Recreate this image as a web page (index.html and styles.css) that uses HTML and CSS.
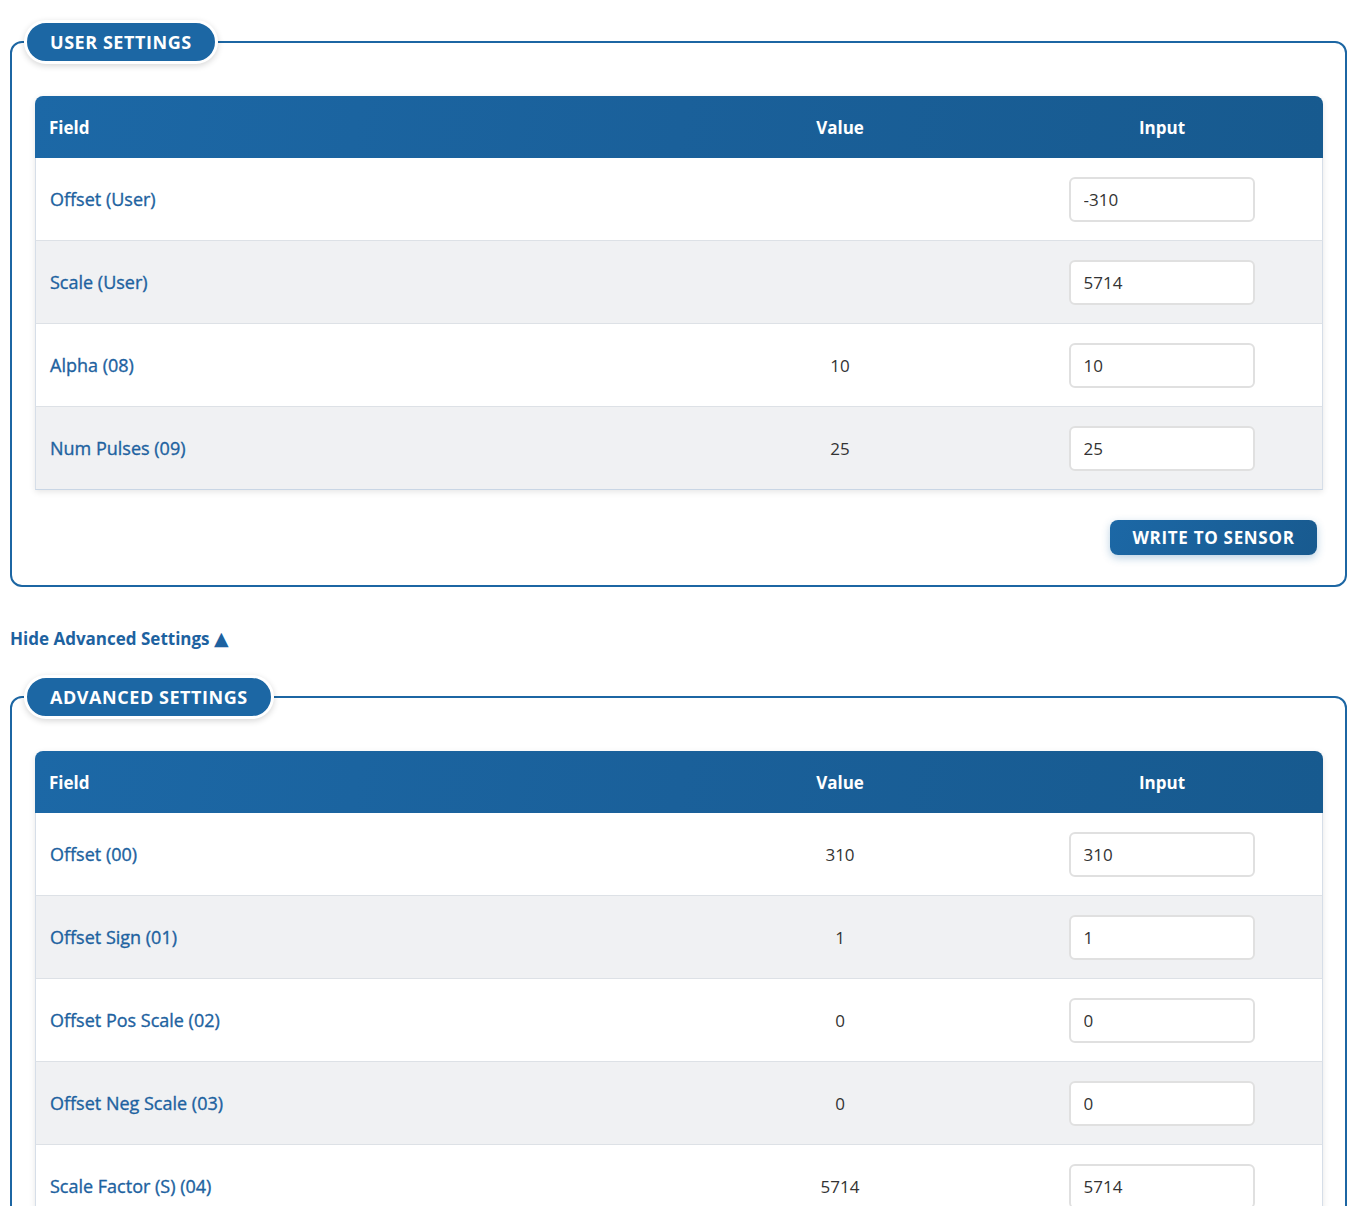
FILE: index.html
```html
<!DOCTYPE html>
<html>
<head>
<meta charset="utf-8">
<link rel="stylesheet" href="styles.css">
</head>
<body>
<div class="page">
  <fieldset class="panel">
    <legend class="pill">USER SETTINGS</legend>
    <table class="grid">
      <thead>
        <tr><th class="c-field">Field</th><th class="c-val">Value</th><th class="c-in">Input</th></tr>
      </thead>
      <tbody>
        <tr><td class="c-field">Offset (User)</td><td class="c-val"></td><td class="c-in"><input class="box" value="-310"></td></tr>
        <tr><td class="c-field">Scale (User)</td><td class="c-val"></td><td class="c-in"><input class="box" value="5714"></td></tr>
        <tr><td class="c-field">Alpha (08)</td><td class="c-val">10</td><td class="c-in"><input class="box" value="10"></td></tr>
        <tr><td class="c-field">Num Pulses (09)</td><td class="c-val">25</td><td class="c-in"><input class="box" value="25"></td></tr>
      </tbody>
    </table>
    <div class="actions"><button class="btn">WRITE TO SENSOR</button></div>
  </fieldset>

  <a class="toggle">Hide Advanced Settings <span class="tri">▲</span></a>

  <fieldset class="panel">
    <legend class="pill">ADVANCED SETTINGS</legend>
    <table class="grid">
      <thead>
        <tr><th class="c-field">Field</th><th class="c-val">Value</th><th class="c-in">Input</th></tr>
      </thead>
      <tbody>
        <tr><td class="c-field">Offset (00)</td><td class="c-val">310</td><td class="c-in"><input class="box" value="310"></td></tr>
        <tr><td class="c-field">Offset Sign (01)</td><td class="c-val">1</td><td class="c-in"><input class="box" value="1"></td></tr>
        <tr><td class="c-field">Offset Pos Scale (02)</td><td class="c-val">0</td><td class="c-in"><input class="box" value="0"></td></tr>
        <tr><td class="c-field">Offset Neg Scale (03)</td><td class="c-val">0</td><td class="c-in"><input class="box" value="0"></td></tr>
        <tr><td class="c-field">Scale Factor (S) (04)</td><td class="c-val">5714</td><td class="c-in"><input class="box" value="5714"></td></tr>
        <tr><td class="c-field">Offset Factor (05)</td><td class="c-val">0</td><td class="c-in"><input class="box" value="0"></td></tr>
      </tbody>
    </table>
  </fieldset>
</div>
</body>
</html>
```
FILE: styles.css
```css
html, body {
  margin: 0;
  padding: 0;
  background: #fff;
}
body {
  font-family: "Open Sans", "Noto Sans", "Liberation Sans", sans-serif;
  color: #333;
}
.page {
  padding: 8px 9px 40px 10px;
}
.panel {
  margin: 12px 0 0 0;
  border: 2px solid #1c66a3;
  border-radius: 12px;
  padding: 32px 22px 30px 23px;
  min-width: 0;
}
.pill {
  margin-left: -11px;
  padding: 0 23px;
  height: 44px;
  box-sizing: border-box;
  line-height: 38px;
  background: #1c67a4;
  color: #fff;
  border: 3px solid #fff;
  border-radius: 22px;
  box-shadow: 0 2px 6px rgba(0, 0, 0, 0.16);
  font-size: 18px;
  font-weight: 700;
  letter-spacing: 0.55px;
}
.grid {
  width: 100%;
  border-collapse: separate;
  border-spacing: 0;
  table-layout: fixed;
  border-radius: 8px 8px 0 0;
  overflow: hidden;
  box-shadow: 0 2px 6px rgba(0, 0, 0, 0.10);
}
.grid thead {
  background: linear-gradient(100deg, #1c68a6 0%, #1a609a 50%, #175a8f 100%);
}
.grid th {
  height: 62px;
  box-sizing: border-box;
  padding: 0 14px;
  background: transparent;
  color: #fff;
  font-size: 17px;
  font-weight: 700;
}
.grid td {
  height: 83px;
  box-sizing: border-box;
  padding: 0 14px;
  border-bottom: 1px solid #dde1e6;
  font-size: 17px;
}
.grid tbody tr:nth-child(even) td {
  background: #f0f1f3;
}
.grid tbody td:first-child {
  border-left: 1px solid #d6dee8;
}
.grid tbody td:last-child {
  border-right: 1px solid #d6dee8;
}
.grid tbody tr:last-child td {
  border-bottom-color: #c9d6e5;
}
.c-field {
  width: 50%;
  text-align: left;
}
td.c-field {
  color: #1d62a0;
  font-size: 18px;
  font-weight: 400;
  -webkit-text-stroke: 0.35px currentColor;
}
.c-val {
  width: 25%;
  text-align: center;
}
.c-in {
  width: 25%;
  text-align: center;
}
.box {
  width: 186px;
  height: 45px;
  box-sizing: border-box;
  border: 2px solid #e0e0e0;
  border-radius: 6px;
  padding: 0 13px;
  font-family: inherit;
  font-size: 17px;
  color: #333;
  background: #fff;
  vertical-align: middle;
}
.actions {
  display: flex;
  justify-content: flex-end;
  margin-top: 30px;
  padding-right: 6px;
}
.btn {
  width: 207px;
  height: 35px;
  border: none;
  border-radius: 8px;
  background: linear-gradient(120deg, #1c68a6 0%, #185a8f 100%);
  color: #fff;
  font-family: inherit;
  font-size: 17px;
  font-weight: 700;
  letter-spacing: 0.7px;
  box-shadow: 0 3px 8px rgba(28, 102, 163, 0.3);
}
.toggle {
  display: block;
  margin: 40px 0 24px 0;
  color: #1d62a0;
  font-size: 17px;
  font-weight: 700;
  line-height: 24px;
}
.tri {
  font-family: "DejaVu Sans", sans-serif;
  font-size: 19px;
  line-height: 1;
}
.toggle + .panel {
  margin-top: 0;
}
```
